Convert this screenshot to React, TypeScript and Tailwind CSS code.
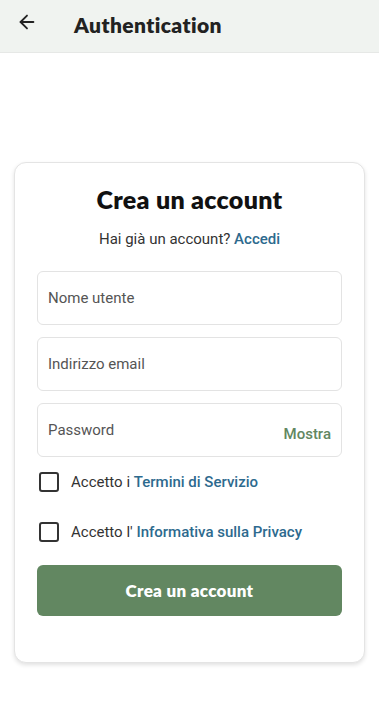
import { ArrowLeft } from "lucide-react";

const heading = { fontFamily: "Lato, 'Noto Sans', sans-serif" };
const body = { fontFamily: "Roboto, 'Noto Sans', sans-serif" };

function Field({ label, trailing }: { label: string; trailing?: string }) {
  return (
    <div className="flex h-[54px] items-center justify-between rounded-md border border-[#e3e3e3] bg-white px-[10px]">
      <span className="text-[15px] text-[#555]">{label}</span>
      {trailing && <span className="mt-2 text-[15px] font-medium text-[#628761]">{trailing}</span>}
    </div>
  );
}

function Check({ prefix, link }: { prefix: string; link: string }) {
  return (
    <label className="flex items-center gap-3 pl-[2px]">
      <span className="h-5 w-5 shrink-0 rounded-[3px] border-2 border-[#333]" />
      <span className="text-[15px] text-[#333]">
        {prefix} <span className="font-medium text-[#2d6a8e]">{link}</span>
      </span>
    </label>
  );
}

export default function App() {
  return (
    <div className="min-h-[714px] w-full bg-white" style={body}>
      {/* ── Top bar ── */}
      <header className="flex h-[53px] items-start gap-9 border-b border-[#e6e8e6] bg-[#f0f3f0] px-4 pt-[9px]">
        <ArrowLeft className="mt-[2px] h-[22px] w-[22px] text-[#222]" strokeWidth={2} />
        <h1 className="text-[21px] font-extrabold tracking-[0.4px] text-[#222]" style={heading}>
          Authentication
        </h1>
      </header>

      {/* ── Card ── */}
      <main className="px-[14px] pt-[109px]">
        <div className="rounded-xl border border-[#e4e4e4] bg-white px-[22px] pb-[46px] pt-[18px] shadow-[0_2px_4px_rgba(0,0,0,0.12)]">
          <h2 className="text-center text-[25px] font-extrabold tracking-[0.3px] text-[#111]" style={heading}>
            Crea un account
          </h2>
          <p className="mt-[9px] text-center text-[15px] text-[#333]">
            Hai già un account? <span className="font-medium text-[#2d6a8e]">Accedi</span>
          </p>

          <div className="mt-[21px] flex flex-col gap-[12px]">
            <Field label="Nome utente" />
            <Field label="Indirizzo email" />
            <Field label="Password" trailing="Mostra" />
          </div>

          <div className="mt-[14px] flex flex-col gap-[27px]">
            <Check prefix="Accetto i" link="Termini di Servizio" />
            <Check prefix="Accetto l'" link="Informativa sulla Privacy" />
          </div>

          <button
            className="mt-[22px] h-[51px] w-full rounded-md bg-[#628761] text-[17px] font-extrabold tracking-[0.3px] text-white"
            style={heading}
          >
            Crea un account
          </button>
        </div>
      </main>
    </div>
  );
}
